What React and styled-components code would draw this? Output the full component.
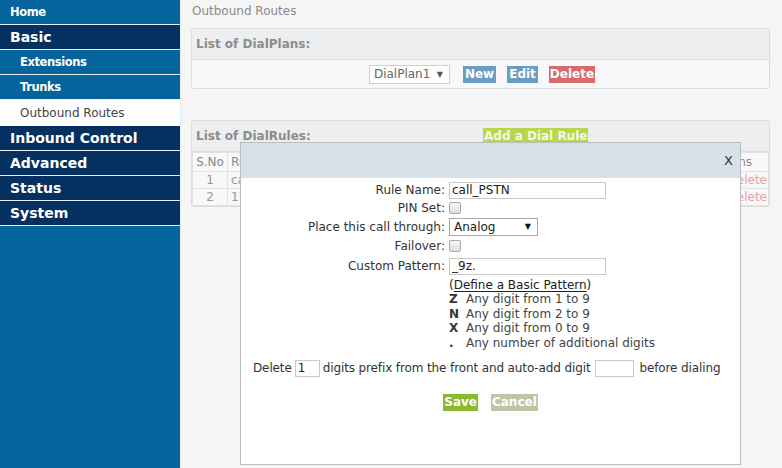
import React from 'react';
import styled, { createGlobalStyle } from 'styled-components';

const GlobalStyle = createGlobalStyle`
  * { box-sizing: border-box; }
  body {
    margin: 0;
    font-family: "DejaVu Sans", Verdana, sans-serif;
    font-size: 12px;
  }
`;

const BLUE = '#04649b';
const NAVY = '#06305f';

const Page = styled.div`
  position: relative;
  display: flex;
  width: 782px;
  height: 468px;
  overflow: hidden;
`;

const Sidebar = styled.div`
  width: 180px;
  flex-shrink: 0;
  background: ${BLUE};
  display: flex;
  flex-direction: column;
`;

const NavItem = styled.div`
  height: ${p => (p.$active ? 26 : 25)}px;
  display: flex;
  align-items: center;
  padding-left: ${p => (p.$sub ? 20 : 10)}px;
  border-bottom: 1px solid ${p => (p.$active ? '#fff' : '#e9f1f7')};
  background: ${p => (p.$active ? '#fff' : p.$dark ? NAVY : BLUE)};
  color: ${p => (p.$active ? '#444' : '#fff')};
  font-weight: ${p => (p.$active ? 'normal' : 'bold')};
  font-size: ${p => (p.$big ? 14 : p.$active ? 12 : 11.5)}px;
  letter-spacing: ${p => (p.$big || p.$active ? 0 : -0.4)}px;
`;

const Main = styled.div`
  flex: 1;
  background: #f5f5f5;
  padding: 0 12px 0 10px;
  border-left: 1px solid #e4eef4;
`;

const Crumb = styled.div`
  height: 28px;
  line-height: 22px;
  color: #8a8a8a;
  padding-left: 1px;
`;

const Panel = styled.div`
  border: 1px solid #dcdcdc;
  border-radius: 3px;
  background: #f8f8f8;
  margin-bottom: ${p => p.$mb || 0}px;
  overflow: hidden;
`;

const PanelHeader = styled.div`
  height: 31px;
  display: flex;
  align-items: center;
  padding-left: 4px;
  background: #eceef0;
  border-bottom: 1px solid #dcdcdc;
  color: #8c8c8c;
  font-weight: bold;
`;

const HeaderTitle = styled.span`
  width: ${p => p.$w}px;
`;

const PanelBody = styled.div`
  height: 28px;
  display: flex;
  justify-content: center;
  align-items: center;
  gap: 11px;
`;

const SelectBox = styled.div`
  width: ${p => p.$w}px;
  height: ${p => p.$h}px;
  display: flex;
  align-items: center;
  justify-content: space-between;
  padding: 0 6px 0 4px;
  background: #fff;
  border: 1px solid ${p => p.$border || '#cfcfcf'};
  color: ${p => p.$color || '#666'};
  margin: 0 ${p => p.$mr || 0}px 0 ${p => p.$ml || 0}px;
`;

const Arrow = styled.span`
  font-size: 8px;
  color: ${p => p.$color || '#555'};
`;

const ActionButton = styled.span`
  display: inline-block;
  height: 17px;
  line-height: 17px;
  padding: 0 ${p => p.$px ?? 2}px;
  background: ${p => p.$bg};
  color: ${p => p.$fg || '#fff'};
  font-weight: bold;
  font-size: 12px;
  white-space: nowrap;
`;

const RulesTable = styled.table`
  width: 100%;
  border-collapse: collapse;
  color: #999;
  font-size: 12px;

  th, td {
    border: 1px solid #e2e2e2;
    height: 17px;
    padding: 0 3px;
    font-weight: normal;
    text-align: left;
    white-space: nowrap;
  }
  th { height: 19px; color: #888; }
  td:first-child, th:first-child { text-align: center; width: 35px; }
  th:last-child { text-align: right; padding-right: 16px; width: 90px; }
  td:last-child { text-align: right; padding-right: 1px; }
`;

const DeleteLink = styled.span`
  color: #eaa0a2;
`;

const Dialog = styled.div`
  position: absolute;
  left: 240px;
  top: 142px;
  width: 501px;
  height: 323px;
  background: #fff;
  border: 1px solid #bdbdbd;
  color: #333;
`;

const DialogHeader = styled.div`
  height: 35px;
  background: #d7e1e8;
  display: flex;
  justify-content: flex-end;
  align-items: center;
  padding-right: 7px;
  font-size: 13px;
  color: #333;
`;

const Form = styled.div`
  padding-top: 2px;
`;

const Row = styled.div`
  display: grid;
  grid-template-columns: 204px auto;
  column-gap: 4px;
  align-items: center;
  height: ${p => p.$h}px;
`;

const Label = styled.span`
  text-align: right;
  white-space: nowrap;
`;

const Cell = styled.div`
  display: flex;
  align-items: center;
`;

const TextInput = styled.input`
  width: ${p => p.$w}px;
  height: 17px;
  margin: 0 ${p => p.$mx || 0}px;
  padding: 0 2px;
  border: 1px solid #c9c9c9;
  font-family: inherit;
  font-size: 12px;
  letter-spacing: 0;
  color: #222;
  outline: none;
`;

const Check = styled.input`
  appearance: none;
  margin: 0;
  width: 12px;
  height: 12px;
  border: 1px solid #a9a9a9;
  border-radius: 2px;
  background: linear-gradient(#f6f6f6, #dedede);
`;

const PatternLink = styled.span`
  color: #222;
  u { text-decoration: underline; text-underline-offset: 2px; }
`;

const Legend = styled.div`
  display: grid;
  grid-template-columns: 17px auto;
  color: #444;
`;

const Key = styled.b`
  color: #333;
`;

const DeleteRow = styled.div`
  display: flex;
  align-items: center;
  height: 20px;
  margin-top: 8px;
  padding-left: 12px;
  white-space: nowrap;
  letter-spacing: -0.12px;
`;

const ButtonRow = styled.div`
  display: flex;
  justify-content: center;
  gap: 13px;
  margin-top: 16px;
`;

const legend = [
  ['Z', 'Any digit from 1 to 9'],
  ['N', 'Any digit from 2 to 9'],
  ['X', 'Any digit from 0 to 9'],
  ['.', 'Any number of additional digits'],
];

export default function App() {
  return (
    <Page>
      <GlobalStyle />
      <Sidebar>
        <NavItem>Home</NavItem>
        <NavItem $dark $big>Basic</NavItem>
        <NavItem $sub>Extensions</NavItem>
        <NavItem $sub>Trunks</NavItem>
        <NavItem $sub $active>Outbound Routes</NavItem>
        <NavItem $dark $big>Inbound Control</NavItem>
        <NavItem $dark $big>Advanced</NavItem>
        <NavItem $dark $big>Status</NavItem>
        <NavItem $dark $big>System</NavItem>
      </Sidebar>

      <Main>
        <Crumb>Outbound Routes</Crumb>

        <Panel $mb={31}>
          <PanelHeader>List of DialPlans:</PanelHeader>
          <PanelBody>
            <SelectBox $w={81} $h={19} $mr={2} $ml={3}>
              DialPlan1 <Arrow>▼</Arrow>
            </SelectBox>
            <ActionButton $bg="#6a9dc1">New</ActionButton>
            <ActionButton $bg="#6a9dc1">Edit</ActionButton>
            <ActionButton $bg="#d96a6c" $px={1}>Delete</ActionButton>
          </PanelBody>
        </Panel>

        <Panel>
          <PanelHeader>
            <HeaderTitle $w={287}>List of DialRules:</HeaderTitle>
            <ActionButton $bg="#b9d54e" $fg="#f4f9e4" $px={1}>Add a Dial Rule</ActionButton>
          </PanelHeader>
          <RulesTable>
            <thead>
              <tr><th>S.No</th><th>Rule Name</th><th>Pattern</th><th>Options</th></tr>
            </thead>
            <tbody>
              <tr><td>1</td><td>call_PSTN</td><td>_9z.</td><td><DeleteLink>Delete</DeleteLink></td></tr>
              <tr><td>2</td><td>171</td><td>_171.</td><td><DeleteLink>Delete</DeleteLink></td></tr>
            </tbody>
          </RulesTable>
        </Panel>
      </Main>

      <Dialog>
        <DialogHeader>X</DialogHeader>
        <Form>
          <Row $h={20}>
            <Label>Rule Name:</Label>
            <Cell><TextInput $w={157} defaultValue="call_PSTN" /></Cell>
          </Row>
          <Row $h={16}>
            <Label>PIN Set:</Label>
            <Cell><Check type="checkbox" /></Cell>
          </Row>
          <Row $h={21}>
            <Label>Place this call through:</Label>
            <Cell>
              <SelectBox $w={89} $h={18} $border="#a9a9a9" $color="#222">
                Analog <Arrow $color="#111">▼</Arrow>
              </SelectBox>
            </Cell>
          </Row>
          <Row $h={18}>
            <Label>Failover:</Label>
            <Cell><Check type="checkbox" /></Cell>
          </Row>
          <Row $h={22}>
            <Label>Custom Pattern:</Label>
            <Cell><TextInput $w={157} defaultValue="_9z." /></Cell>
          </Row>
          <Row $h={15}>
            <span />
            <PatternLink>(<u>Define a Basic Pattern</u>)</PatternLink>
          </Row>
          {legend.map(([k, text]) => (
            <Row $h={14.6} key={k}>
              <span />
              <Legend>
                <Key>{k}</Key>
                <span>{text}</span>
              </Legend>
            </Row>
          ))}
          <DeleteRow>
            Delete
            <TextInput $w={25} $mx={3} defaultValue="1" />
            digits prefix from the front and auto-add digit
            <TextInput $w={39} $mx={5} defaultValue="" />
            before dialing
          </DeleteRow>
          <ButtonRow>
            <ActionButton $bg="#8ab92d" $px={1}>Save</ActionButton>
            <ActionButton $bg="#c2c3a5" $px={1}>Cancel</ActionButton>
          </ButtonRow>
        </Form>
      </Dialog>
    </Page>
  );
}
